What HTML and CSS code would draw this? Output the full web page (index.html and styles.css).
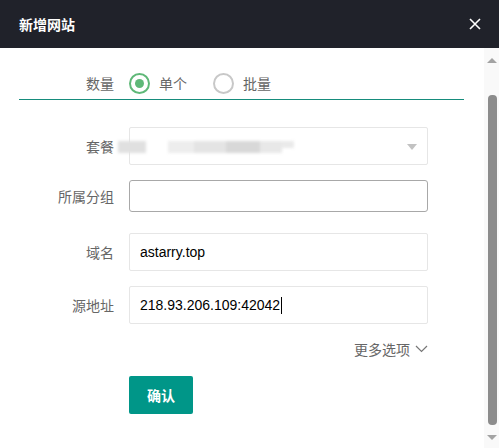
FILE: index.html
```html
<!DOCTYPE html>
<html lang="zh-CN">
<head>
  <meta charset="UTF-8">
  <title>新增网站</title>
  <link rel="stylesheet" href="styles.css">
</head>
<body>
  <div class="layer">
    <div class="layer-title">
      <span>新增网站</span>
      <svg class="close" width="12" height="12" viewBox="0 0 12 12">
        <path d="M1 1L11 11M11 1L1 11" stroke="#fff" stroke-width="1.6" fill="none"/>
      </svg>
    </div>

    <div class="layer-body">
      <div class="content">
        <div class="form-item tab-row">
          <label class="form-label">数量</label>
          <div class="radio checked"><i></i><span>单个</span></div>
          <div class="radio"><i></i><span>批量</span></div>
        </div>

        <div class="form-item">
          <label class="form-label">套餐</label>
          <div class="select">
            <div class="blurred">
              <b class="b1"></b><b class="b2"></b><b class="b3"></b><b class="b4"></b><b class="b5"></b><b class="b6"></b>
            </div>
            <span class="edge"></span>
          </div>
        </div>

        <div class="form-item row-group">
          <label class="form-label">所属分组</label>
          <div class="input active"></div>
        </div>

        <div class="form-item">
          <label class="form-label">域名</label>
          <div class="input">astarry.top</div>
        </div>

        <div class="form-item">
          <label class="form-label">源地址</label>
          <div class="input">218.93.206.109:42042<span class="caret"></span></div>
        </div>

        <div class="more">
          <span>更多选项</span>
          <svg width="13" height="8" viewBox="0 0 13 8">
            <path d="M1 1L6.5 6.5L12 1" stroke="#777" stroke-width="1.2" fill="none"/>
          </svg>
        </div>

        <div class="btn-row">
          <button class="btn">确认</button>
        </div>
      </div>

      <div class="scrollbar">
        <span class="arrow up"></span>
        <div class="track"><div class="thumb"></div></div>
        <span class="arrow down"></span>
      </div>
    </div>
  </div>
</body>
</html>
```

FILE: styles.css
```css
body {
  margin: 0;
  font-family: "Liberation Sans", "Noto Sans CJK SC", sans-serif;
  font-size: 14px;
  color: #333;
  background: #fff;
}
.layer { width: 499px; height: 448px; overflow: hidden; }

.layer-title {
  height: 48px;
  background: #20222a;
  color: #fff;
  font-weight: bold;
  display: flex;
  align-items: center;
  justify-content: space-between;
  padding: 0 18px 0 19px;
  box-sizing: border-box;
}
.layer-title span { margin-top: -1px; }
.close { margin-top: -1px; }

.layer-body { display: flex; height: 400px; }
.content { flex: 1; padding: 0 20px 0 19px; }

.form-item { display: flex; align-items: center; margin-bottom: 15px; }
.form-label {
  width: 95px;
  padding-right: 15px;
  text-align: right;
  color: #666;
  flex-shrink: 0;
}

.tab-row {
  height: 52px;
  border-bottom: 1px solid #168c7c;
  margin-bottom: 27px;
  padding-top: 19px;
  box-sizing: border-box;
}
.radio { display: flex; align-items: center; margin-right: 26px; color: #666; }
.radio i {
  width: 17px;
  height: 17px;
  border: 2px solid #c8c8c8;
  border-radius: 50%;
  margin-right: 9px;
  position: relative;
}
.radio.checked i { border-color: #5fb878; }
.radio.checked i::after {
  content: "";
  position: absolute;
  left: 4px; top: 4px;
  width: 9px; height: 9px;
  border-radius: 50%;
  background: #5fb878;
}

.select, .input {
  width: 299px;
  height: 38px;
  box-sizing: border-box;
  border: 1px solid #e6e6e6;
  border-radius: 2px;
  padding-left: 10px;
  display: flex;
  align-items: center;
  color: #000;
}
.select { position: relative; }
.select .edge {
  position: absolute;
  right: 10px; top: 16px;
  border: 5px solid transparent;
  border-top: 6px solid #c2c2c2;
  border-bottom: 0;
}
.blurred {
  position: absolute;
  left: -12px; top: 13px;
  display: flex;
  filter: blur(1.5px);
}
.blurred b { height: 12px; background: #ddd; }
.blurred .b1 { width: 28px; background: #e0e0e0; }
.blurred .b2 { width: 26px; margin-left: 22px; background: #ededed; }
.blurred .b3 { width: 32px; background: #e4e4e4; }
.blurred .b4 { width: 34px; background: #d8d8d8; }
.blurred .b5 { width: 22px; background: #e8e8e8; }
.blurred .b6 { width: 12px; height: 7px; background: #eaeaea; }

.row-group .input {
  height: 32px;
  border-color: #a8a8a8;
  border-radius: 3px;
}
.row-group { margin-bottom: 21px; }

.caret {
  display: inline-block;
  width: 1px;
  height: 17px;
  background: #000;
  margin-left: 1px;
}

.more {
  width: 409px;
  display: flex;
  justify-content: flex-end;
  align-items: center;
  gap: 5px;
  color: #666;
  margin-top: 1px;
}

.btn-row { padding-left: 110px; margin-top: 17px; }
.btn {
  width: 64px;
  height: 38px;
  border: 0;
  border-radius: 2px;
  background: #009688;
  color: #fff;
  font: bold 14px "Liberation Sans", "Noto Sans CJK SC", sans-serif;
}

.scrollbar {
  width: 15px;
  margin-left: auto;
  background: #f9f9f9;
  display: flex;
  flex-direction: column;
  align-items: center;
}
.arrow { border: 5px solid transparent; width: 0; height: 0; }
.arrow.up { border-bottom: 5px solid #a3a3a3; border-top: 0; margin-top: 10px; }
.arrow.down { border-top: 5px solid #a3a3a3; border-bottom: 0; margin-bottom: 8px; }
.track { flex: 1; width: 100%; display: flex; justify-content: center; padding: 32px 0 10px; box-sizing: border-box; }
.thumb { width: 9px; background: #8c8c8c; border-radius: 4px; margin-left: 2px; }
```
